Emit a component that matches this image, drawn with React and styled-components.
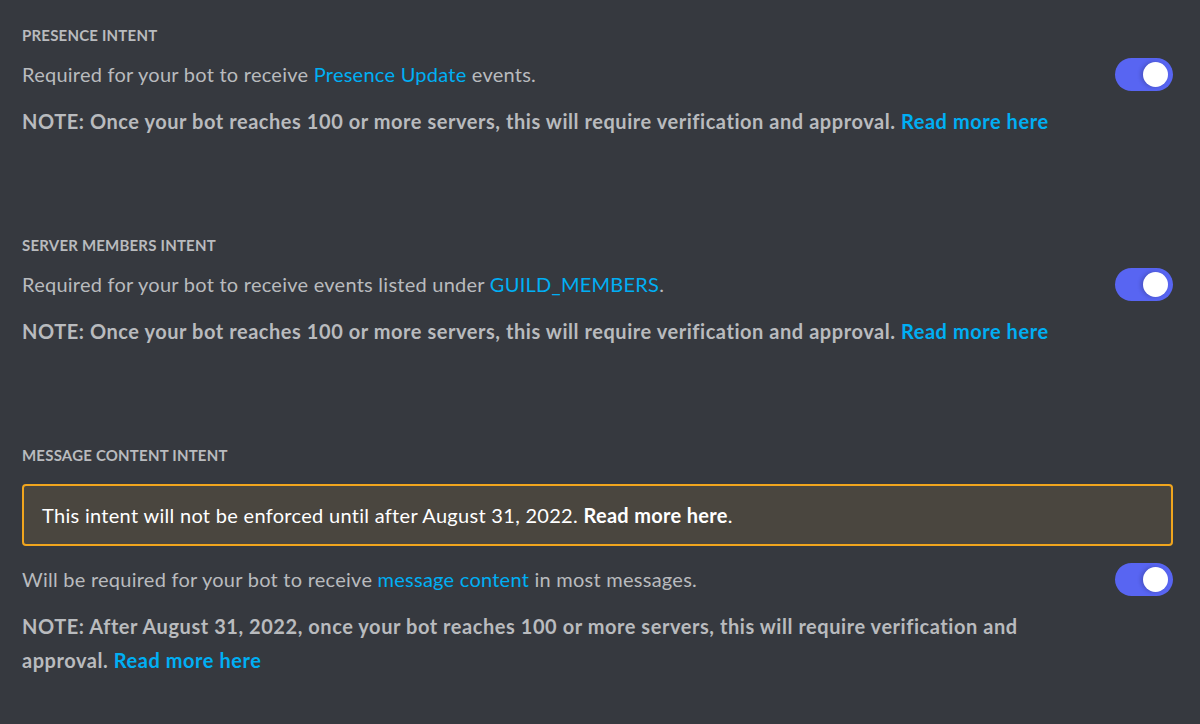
import React from "react";
import styled, { createGlobalStyle } from "styled-components";

const Global = createGlobalStyle`
  html, body { margin: 0; padding: 0; background: #36393f; }
  body { font-family: Lato, "Open Sans", sans-serif; }
`;

const Page = styled.div`
  width: 1200px;
  height: 724px;
  box-sizing: border-box;
  padding: 26px 27px 0 22px;
  background: #36393f;
  display: flex;
  flex-direction: column;
  gap: 98px;
  overflow: hidden;
`;

const Section = styled.section`
  display: flex;
  flex-direction: column;
`;

const Heading = styled.h3`
  margin: 0 0 ${(p) => p.$gap}px;
  font-size: 15px;
  line-height: 18px;
  font-weight: 700;
  letter-spacing: 0.2px;
  color: #b9bbbe;
  text-transform: uppercase;
`;

const Row = styled.div`
  display: flex;
  align-items: center;
  justify-content: space-between;
  height: 33px;
`;

const Description = styled.p`
  margin: -1px 0 0;
  font-size: 20px;
  line-height: 24px;
  letter-spacing: 0.25px;
  color: #b9bbbe;
`;

const Link = styled.a`
  color: #00aff4;
  text-decoration: none;
  font-weight: ${(p) => (p.$bold ? 700 : "inherit")};
`;

const Note = styled.p`
  margin: 13px 0 0;
  max-width: 1060px;
  font-size: 20px;
  line-height: 34px;
  font-weight: 700;
  letter-spacing: 0.55px;
  color: #b9bbbe;
`;

const Toggle = styled.div`
  position: relative;
  flex: none;
  width: 58px;
  height: 33px;
  border-radius: 17px;
  background: #5865f2;
`;

const Knob = styled.span`
  position: absolute;
  top: 4px;
  right: 5px;
  width: 25px;
  height: 25px;
  border-radius: 50%;
  background: #ffffff;
  box-shadow: -2px 0 4px rgba(0, 0, 0, 0.2);
`;

const Warning = styled.div`
  margin-bottom: 17px;
  height: 62px;
  box-sizing: border-box;
  padding: 0 18px;
  display: flex;
  align-items: center;
  border: 2px solid #f0a51e;
  border-radius: 4px;
  background: #4a463f;
  font-size: 20px;
  letter-spacing: 0.3px;
  color: #ffffff;
`;

const Strong = styled.strong`
  font-weight: 700;
`;

const Switch = () => (
  <Toggle>
    <Knob />
  </Toggle>
);

export default function App() {
  return (
    <>
      <Global />
      <Page>
        <Section>
          <Heading $gap={14}>Presence Intent</Heading>
          <Row>
            <Description>
              Required for your bot to receive <Link>Presence Update</Link> events.
            </Description>
            <Switch />
          </Row>
          <Note>
            NOTE: Once your bot reaches 100 or more servers, this will require verification and
            approval. <Link $bold>Read more here</Link>
          </Note>
        </Section>
        <Section>
          <Heading $gap={14}>Server Members Intent</Heading>
          <Row>
            <Description>
              Required for your bot to receive events listed under <Link>GUILD_MEMBERS</Link>.
            </Description>
            <Switch />
          </Row>
          <Note>
            NOTE: Once your bot reaches 100 or more servers, this will require verification and
            approval. <Link $bold>Read more here</Link>
          </Note>
        </Section>
        <Section>
          <Heading $gap={20}>Message Content Intent</Heading>
          <Warning>
            <span>
              This intent will not be enforced until after August 31, 2022.{" "}
              <Strong>Read more here</Strong>.
            </span>
          </Warning>
          <Row>
            <Description>
              Will be required for your bot to receive <Link>message content</Link> in most messages.
            </Description>
            <Switch />
          </Row>
          <Note>
            NOTE: After August 31, 2022, once your bot reaches 100 or more servers, this will
            require verification and approval. <Link $bold>Read more here</Link>
          </Note>
        </Section>
      </Page>
    </>
  );
}
